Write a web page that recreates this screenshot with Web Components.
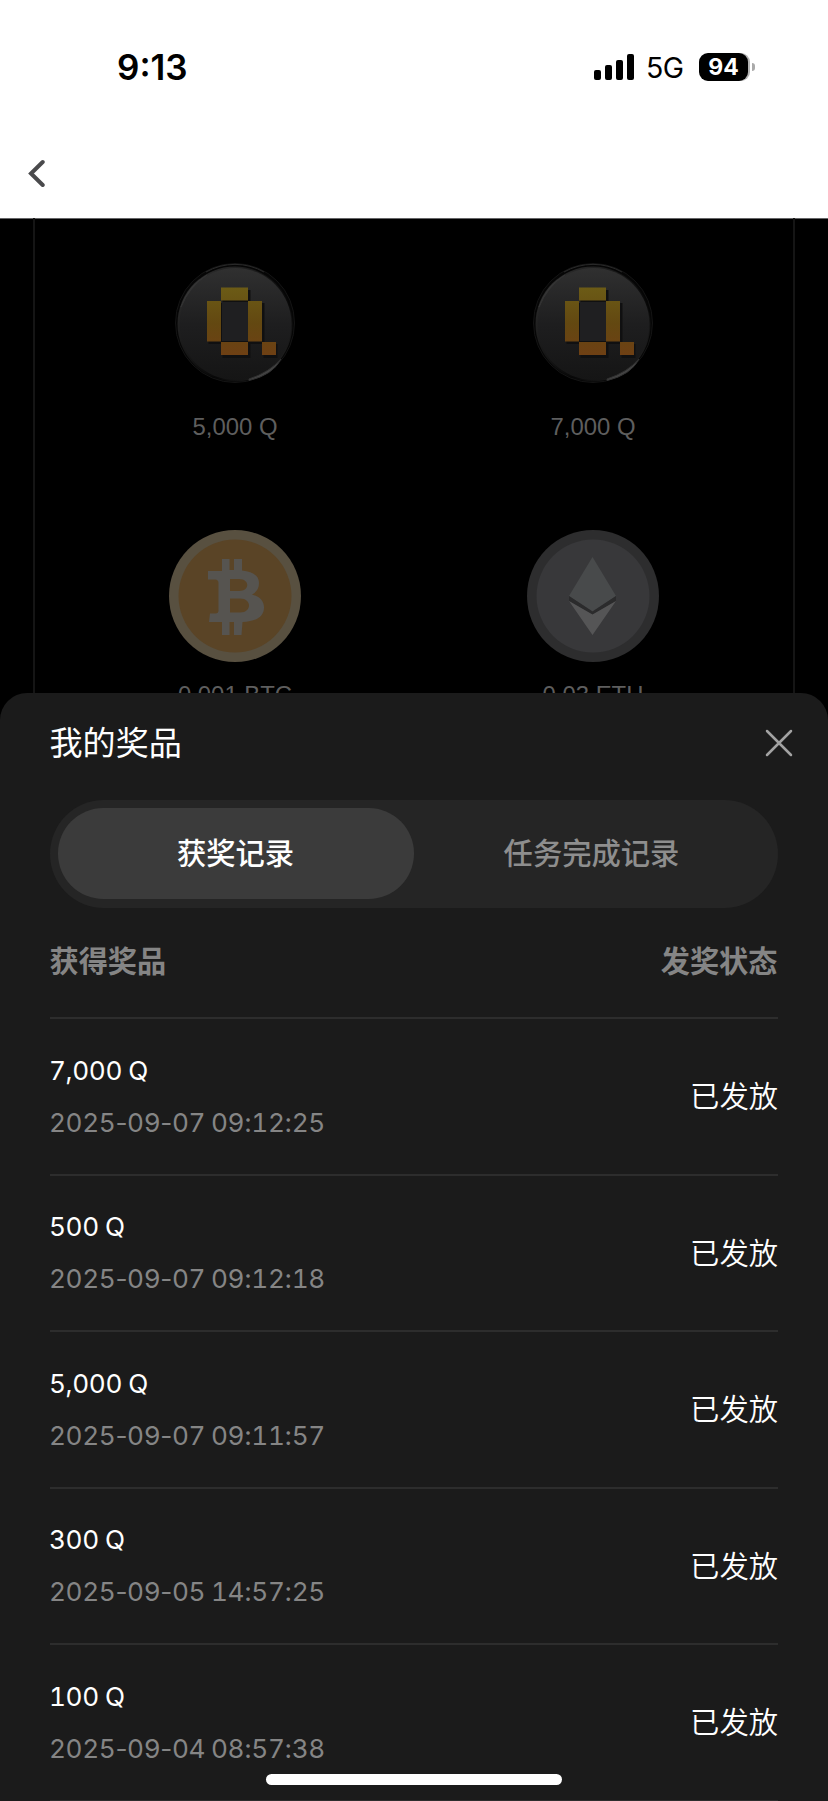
<!DOCTYPE html>
<html lang="zh-CN">
<head>
<meta charset="utf-8">
<title>我的奖品</title>
<style>
html,body{margin:0;background:#000;}
body{width:828px;height:1801px;overflow:hidden;font-family:Inter,"Noto Sans CJK SC",sans-serif;}
</style>
</head>
<body>
<reward-app></reward-app>
<script>
const define = (name, html) => customElements.define(name, class extends HTMLElement {
  constructor() {
    super();
    this.attachShadow({ mode: 'open' });
  }
  connectedCallback() {
    if (this.shadowRoot.childNodes.length) return;
    const t = document.createElement('template');
    t.innerHTML = typeof html === 'function' ? html(this) : html;
    this.shadowRoot.append(t.content.cloneNode(true));
  }
});

define('status-bar', `
<style>
:host{display:flex;box-sizing:border-box;height:128px;padding:47px 73px 0 117px;justify-content:space-between;align-items:flex-start;color:#000}
.time{font:600 35px/41px Inter,sans-serif}
.right{display:flex;align-items:center;height:40px}
.net{font:400 28.5px/40px Inter,sans-serif;margin:2px 0 0 11px;letter-spacing:-.5px;width:53px}
.bat{display:flex;align-items:center;gap:1px}
.cell{width:49px;height:28px;border-radius:9px;background:#000;color:#fff;font:700 23px/28px Inter,sans-serif;text-align:center;box-shadow:2px 0 0 #b4b4b4}
.nub{width:3px;height:8px;margin-left:3px;border-radius:0 4px 4px 0;background:#aaa}
</style>
<span class="time">9:13</span>
<div class="right">
<svg width="41" height="28" viewBox="0 0 41 28"><rect x="0" y="17" width="7" height="10" rx="2"/><rect x="11" y="12" width="7" height="15" rx="2"/><rect x="22" y="7" width="7" height="20" rx="2"/><rect x="33" y="1" width="7" height="26" rx="2"/></svg>
<span class="net">5G</span>
<div class="bat"><span class="cell">94</span><span class="nub"></span></div>
</div>`);

define('nav-bar', `
<style>:host{display:flex;align-items:center;height:90px;padding-left:27px}</style>
<svg width="18" height="28" viewBox="0 0 18 28" fill="none" stroke="#4a4a4c" stroke-width="4" stroke-linecap="round" stroke-linejoin="miter"><path d="M15.700 3 4 14.500 15.700 26"/></svg>`);

const coins = {
  q: `<svg width="132" height="132" viewBox="0 0 132 132">
<defs><linearGradient id="d" x1="0" y1="0" x2="0" y2="1"><stop offset="0" stop-color="#303030"/><stop offset=".5" stop-color="#1e1e1f"/><stop offset="1" stop-color="#151515"/></linearGradient>
<linearGradient id="g" gradientUnits="userSpaceOnUse" x1="0" y1="28" x2="0" y2="96"><stop offset="0" stop-color="#6c5c16"/><stop offset=".55" stop-color="#634811"/><stop offset="1" stop-color="#6e4014"/></linearGradient>
<linearGradient id="r" x1="0" y1="0" x2="1" y2="1"><stop offset="0" stop-color="#343434"/><stop offset=".35" stop-color="#1b1b1b"/><stop offset=".65" stop-color="#080808"/><stop offset=".86" stop-color="#1e1e1e"/><stop offset="1" stop-color="#383838"/></linearGradient></defs>
<circle cx="66" cy="65" r="59.500" fill="#060606" stroke="#141414"/>
<circle cx="66" cy="66" r="57.500" fill="url(#r)"/>
<circle cx="66.500" cy="66" r="56" fill="url(#d)"/>
<path d="M12 49A56.500 56.500 0 0 1 38 17Q20 29 12 49Z" fill="#3c3c3c" stroke="#333" stroke-width="1"/>
<path d="M37 14A59 59 0 0 1 95 14" fill="none" stroke="#2a2a2a" stroke-width="1"/>
<path d="M80 121Q101 114 112 101Q104 117 80 122.500Z" fill="#444" stroke="#303030" stroke-width="1"/>
<g fill="#101011" transform="translate(1.500 2)"><path d="M52 30h28v13h14v41h13v14H93V84H80v14H52V84H38V43h14z"/></g>
<path fill="#1f1f21" d="M53 44h26v39H53z"/>
<g fill="url(#g)"><path d="M52 29.500h27v13H52zM38 43h14v40.500H38zM79 43h14v40.500H79zM52 84h27v13H52zM93 84h14v13H93z"/></g></svg>`,
  btc: `<svg width="132" height="132" viewBox="0 0 132 132"><circle cx="66" cy="66" r="66" fill="#585040"/><circle cx="66" cy="66" r="56.500" fill="#5a4426"/>
<path fill="#565450" fill-rule="evenodd" d="M53 29h7.500v11h4.500V29h8v11.500C84 41.500 90 46 90 53c0 5.500-2.500 9-7 11.500 7.500 2 12 6.500 12 13 0 9-7.500 14-21.500 14.500L72.500 105h-7.500V92h-4.500v13H53V92H40l1-8.500h5.500q3 0 3-3V53q0-3.500-3.500-3.500H39V41h14zM61 49v12h9c11 0 11-12 0-12zM61 68.500V82.500h10c12 0 12-14 0-14z"/></svg>`,
  eth: `<svg width="132" height="132" viewBox="0 0 132 132"><circle cx="66" cy="66" r="66" fill="#2d2d2e"/><circle cx="66" cy="66" r="56.500" fill="#38383a"/><path fill="#484a4b" d="M65.500 27 89 66 65.500 81.500 42 66z"/><path fill="#2b2b2c" d="M42 66 65.500 81.500 89 66v5L65.500 85 42 71z"/><path fill="#555556" d="M42 71 65.500 84.500 89 71 65.500 105z"/></svg>`
};

define('prize-cell', el => `
<style>
:host{display:flex;flex-direction:column;align-items:center;height:267.500px}
svg{display:block}
.art{height:132px;${el.getAttribute('coin') === 'q' ? 'margin-top:-4px;margin-bottom:4px;' : ''}}
span{margin-top:18px;font:23.900px/30px "Liberation Sans",Arial,sans-serif;color:#5e5e5e;white-space:nowrap}
</style>
<div class="art">${coins[el.getAttribute('coin')]}</div><span><slot></slot></span>`);

define('prize-board', `
<style>
:host{display:grid;box-sizing:border-box;height:515px;margin:0 33px;padding:44px 20px 0;border:solid #151515;border-width:0 2px;grid-template-columns:358px 358px;grid-auto-rows:267.500px;justify-content:center;overflow:hidden}
</style>
<prize-cell coin="q">5,000 Q</prize-cell><prize-cell coin="q">7,000 Q</prize-cell>
<prize-cell coin="btc">0.001 BTC</prize-cell><prize-cell coin="eth">0.03 ETH</prize-cell>`);

define('record-tabs', `
<style>
:host{display:grid;box-sizing:border-box;grid-template-columns:1fr 1fr;height:108px;margin:22px 50px 0;padding:8px;border-radius:54px;background:#252525;font-size:29.300px;font-weight:500;color:#8e8e8e}
div{display:flex;box-sizing:border-box;align-items:center;justify-content:center;border-radius:46px;height:91px;padding:0 1px 5px 0}
.on{background:#3b3b3b;color:#fff}
</style>
<div class="on">获奖记录</div><div>任务完成记录</div>`);

// Digits are tabular, separators keep their own width.
const stamp = s => s.replace(/\d+/g, '<b>$&</b>');

define('record-row', el => `
<style>
:host{display:flex;box-sizing:border-box;height:156.550px;justify-content:space-between;align-items:center;border-bottom:2px solid #2d2d2d}
.l{display:flex;flex-direction:column;gap:20px;padding-top:1px;margin-left:-1px;font:400 26.200px/32px Inter,sans-serif;white-space:nowrap;letter-spacing:-.38px}
.n{color:#fff;word-spacing:-.500px;font-feature-settings:"tnum" 1}
.d{color:#858585;word-spacing:-1.200px}
b{font-weight:400;font-feature-settings:"tnum" 1}
.s{font-size:29.300px;color:#fff;font-weight:350;padding-bottom:4px}
</style>
<div class="l"><span class="n"><slot></slot></span><span class="d">${stamp(el.getAttribute('time'))}</span></div><span class="s">已发放</span>`);

define('prize-sheet', `
<style>
:host{display:block;position:relative;margin-top:-40px;height:1108px;background:#1b1b1b;border-radius:27px 27px 0 0;overflow:hidden}
header{display:flex;height:85px;padding:15px 35px 0 49.500px;box-sizing:border-box;justify-content:space-between;align-items:center;color:#fff;font-size:33.100px}
header span{padding-bottom:5px}
.cols{display:flex;box-sizing:border-box;justify-content:space-between;align-items:center;height:111px;margin:0 50px;padding-bottom:7px;border-bottom:2px solid #2d2d2d;color:#858585;font-size:29.200px;font-weight:600}
.cols span{margin:0 .500px 0 -.500px}
.list{margin:0 50px}
.home{position:absolute;left:266px;top:1081px;width:296px;height:10.500px;border-radius:6px;background:#fff}
</style>
<header><span>我的奖品</span><svg width="28" height="28" viewBox="0 0 28 28" stroke="#a2a2a2" stroke-width="2.500" stroke-linecap="round"><path d="M2 2 26 26M26 2 2 26"/></svg></header>
<record-tabs></record-tabs>
<div class="cols"><span>获得奖品</span><span>发奖状态</span></div>
<div class="list">
<record-row time="2025-09-07 09:12:25">7,000 Q</record-row>
<record-row time="2025-09-07 09:12:18">500 Q</record-row>
<record-row time="2025-09-07 09:11:57">5,000 Q</record-row>
<record-row time="2025-09-05 14:57:25">300 Q</record-row>
<record-row time="2025-09-04 08:57:38">100 Q</record-row>
</div>
<div class="home"></div>`);

define('reward-app', `
<style>:host{display:block;width:828px;height:1801px;overflow:hidden;background:#000}.top{background:#fff;height:218px;border-bottom:1px solid #656567;margin-bottom:-1px}</style>
<div class="top"><status-bar></status-bar><nav-bar></nav-bar></div>
<prize-board></prize-board>
<prize-sheet></prize-sheet>`);
</script>
</body>
</html>
